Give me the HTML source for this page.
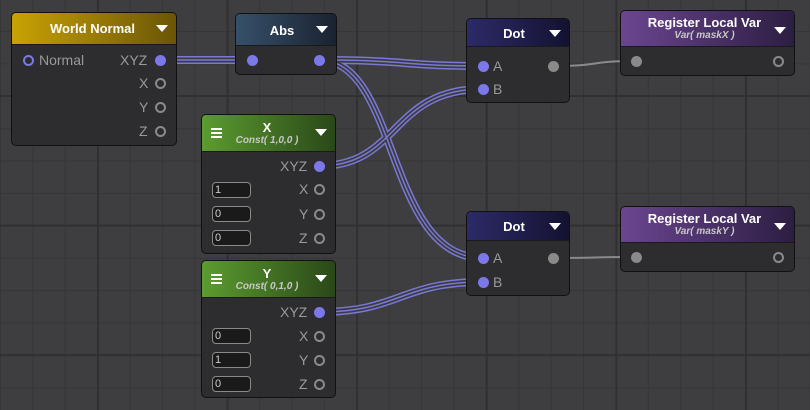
<!DOCTYPE html>
<html><head><meta charset="utf-8"><style>
html,body{margin:0;padding:0;}
body{width:810px;height:410px;overflow:hidden;position:relative;font-family:"Liberation Sans",sans-serif;
background-color:#3e3e40;
background-image:
linear-gradient(to right,#303031 2px,transparent 2px),
linear-gradient(to bottom,#303031 2px,transparent 2px),
linear-gradient(to right,#363637 1px,transparent 1px),
linear-gradient(to bottom,#363637 1px,transparent 1px);
background-size:129.6px 129.6px,129.6px 129.6px,32.4px 32.4px,32.4px 32.4px;
background-position:97px 0,0 95px,0 31px,0 31px;}
.n{position:absolute;background:#2d2d30;border:1px solid #111;border-radius:5px;box-sizing:border-box;}
.h{position:absolute;left:0;right:0;top:0;border-radius:4px 4px 0 0;color:#fff;font-weight:bold;font-size:13px;text-align:center;border-bottom:1px solid #1a1a1a}
.h .t{position:absolute;left:0;right:18px;}
.h .s{position:absolute;left:0;right:18px;font-style:italic;font-weight:bold;font-size:10px;color:#c8c8c8}
.tri{position:absolute;right:8px;width:0;height:0;border-left:6px solid transparent;border-right:6px solid transparent;border-top:7px solid #fff}
.menu{position:absolute;left:9px;width:11px;height:2px;background:#fff;box-shadow:0 4px 0 #fff,0 8px 0 #fff}
.l{position:absolute;color:#9a9a9a;font-size:14px;line-height:16px}
.dot{position:absolute;width:11px;height:11px;border-radius:50%;background:#7b78e8;margin:-5.5px 0 0 -5.5px}
.ring{position:absolute;width:7px;height:7px;border-radius:50%;border:2px solid #8a8a8a;margin:-5.5px 0 0 -5.5px}
.gd{position:absolute;width:11px;height:11px;border-radius:50%;background:#8a8a8a;margin:-5.5px 0 0 -5.5px}
.in{position:absolute;width:35px;height:14px;border:1px solid #8a8a8a;border-radius:4px;background:#1a1a1a;color:#ccc;font-size:11px;line-height:14px;padding-left:2px;box-sizing:content-box}
svg{position:absolute;left:0;top:0}
</style></head><body>
<svg width="810" height="410">
<defs>
<g id="w" fill="none">
<path d="M160 60 C200 60 210 60 252 60"/>
<path d="M319 60 C410 60 400 66 483 66"/>
<path d="M319 60 C400 60 385 258 483 258"/>
<path d="M319 166 C400 166 390 89 483 89"/>
<path d="M319 312 C400 312 400 282 483 282"/>
</g>
</defs>
<use href="#w" stroke="#7a78d6" stroke-width="8" fill="none"/>
<use href="#w" stroke="#3c3c40" stroke-width="5" fill="none"/>
<use href="#w" stroke="#7a78d6" stroke-width="1.5" fill="none"/>
<path d="M553 66 C600 66 590 61 636 61" stroke="#8a8a8a" stroke-width="2" fill="none"/>
<path d="M553 258 C600 258 590 257 636 257" stroke="#8a8a8a" stroke-width="2" fill="none"/>
</svg>

<!-- World Normal -->
<div class="n" style="left:11px;top:12px;width:166px;height:134px">
<div class="h" style="height:31px;background:linear-gradient(to right,#c9a204,#6a5508)"><div class="t" style="top:8px;left:15px">World Normal</div><div class="tri" style="top:12px"></div></div>
</div>
<div class="ring" style="left:28px;top:60px;border-color:#7b78e8"></div>
<div class="l" style="left:39px;top:52px">Normal</div>
<div class="l" style="left:120px;top:52px">XYZ</div><div class="dot" style="left:160px;top:60px"></div>
<div class="l" style="left:139px;top:75px">X</div><div class="ring" style="left:160px;top:83px"></div>
<div class="l" style="left:139px;top:99px">Y</div><div class="ring" style="left:160px;top:107px"></div>
<div class="l" style="left:139px;top:123px">Z</div><div class="ring" style="left:160px;top:131px"></div>

<!-- Abs -->
<div class="n" style="left:235px;top:13px;width:102px;height:62px">
<div class="h" style="height:31px;background:linear-gradient(to right,#36506a,#1a2230)"><div class="t" style="top:9px;left:10px">Abs</div><div class="tri" style="top:12px"></div></div>
</div>
<div class="dot" style="left:252px;top:60px"></div><div class="dot" style="left:319px;top:60px"></div>

<!-- X const -->
<div class="n" style="left:201px;top:114px;width:135px;height:140px">
<div class="h" style="height:36px;background:linear-gradient(to right,#5c9c30,#2a4818)"><div class="menu" style="top:13px"></div><div class="t" style="top:5px;left:15px">X</div><div class="s" style="top:20px;left:15px">Const( 1,0,0 )</div><div class="tri" style="top:14px"></div></div>
</div>
<div class="l" style="left:280px;top:158px">XYZ</div><div class="dot" style="left:319px;top:166px"></div>
<div class="in" style="left:212px;top:182px">1</div><div class="l" style="left:299px;top:181px">X</div><div class="ring" style="left:319px;top:189px"></div>
<div class="in" style="left:212px;top:206px">0</div><div class="l" style="left:299px;top:206px">Y</div><div class="ring" style="left:319px;top:214px"></div>
<div class="in" style="left:212px;top:230px">0</div><div class="l" style="left:299px;top:230px">Z</div><div class="ring" style="left:319px;top:238px"></div>

<!-- Y const -->
<div class="n" style="left:201px;top:260px;width:135px;height:138px">
<div class="h" style="height:36px;background:linear-gradient(to right,#5c9c30,#2a4818)"><div class="menu" style="top:13px"></div><div class="t" style="top:5px;left:15px">Y</div><div class="s" style="top:20px;left:15px">Const( 0,1,0 )</div><div class="tri" style="top:14px"></div></div>
</div>
<div class="l" style="left:280px;top:304px">XYZ</div><div class="dot" style="left:319px;top:312px"></div>
<div class="in" style="left:212px;top:328px">0</div><div class="l" style="left:299px;top:328px">X</div><div class="ring" style="left:319px;top:336px"></div>
<div class="in" style="left:212px;top:352px">1</div><div class="l" style="left:299px;top:352px">Y</div><div class="ring" style="left:319px;top:360px"></div>
<div class="in" style="left:212px;top:376px">0</div><div class="l" style="left:299px;top:376px">Z</div><div class="ring" style="left:319px;top:384px"></div>

<!-- Dot 1 -->
<div class="n" style="left:466px;top:18px;width:104px;height:85px">
<div class="h" style="height:27px;background:linear-gradient(to right,#2c2a68,#141230)"><div class="t" style="top:7px;left:10px">Dot</div><div class="tri" style="top:11px"></div></div>
</div>
<div class="dot" style="left:483px;top:66px"></div><div class="l" style="left:493px;top:58px">A</div><div class="gd" style="left:553px;top:66px"></div>
<div class="dot" style="left:483px;top:89px"></div><div class="l" style="left:493px;top:81px">B</div>

<!-- Dot 2 -->
<div class="n" style="left:466px;top:211px;width:104px;height:85px">
<div class="h" style="height:28px;background:linear-gradient(to right,#2c2a68,#141230)"><div class="t" style="top:7px;left:10px">Dot</div><div class="tri" style="top:11px"></div></div>
</div>
<div class="dot" style="left:483px;top:258px"></div><div class="l" style="left:493px;top:250px">A</div><div class="gd" style="left:553px;top:258px"></div>
<div class="dot" style="left:483px;top:282px"></div><div class="l" style="left:493px;top:274px">B</div>

<!-- Register 1 -->
<div class="n" style="left:620px;top:10px;width:175px;height:66px">
<div class="h" style="height:35px;background:linear-gradient(to right,#6b4590,#2c1e42)"><div class="t" style="top:4px;left:12px">Register Local Var</div><div class="s" style="top:19px;left:12px">Var( maskX )</div><div class="tri" style="top:16px"></div></div>
</div>
<div class="gd" style="left:636px;top:61px"></div><div class="ring" style="left:778px;top:61px"></div>

<!-- Register 2 -->
<div class="n" style="left:620px;top:206px;width:175px;height:66px">
<div class="h" style="height:35px;background:linear-gradient(to right,#6b4590,#2c1e42)"><div class="t" style="top:4px;left:12px">Register Local Var</div><div class="s" style="top:19px;left:12px">Var( maskY )</div><div class="tri" style="top:16px"></div></div>
</div>
<div class="gd" style="left:636px;top:257px"></div><div class="ring" style="left:778px;top:257px"></div>
</body></html>
